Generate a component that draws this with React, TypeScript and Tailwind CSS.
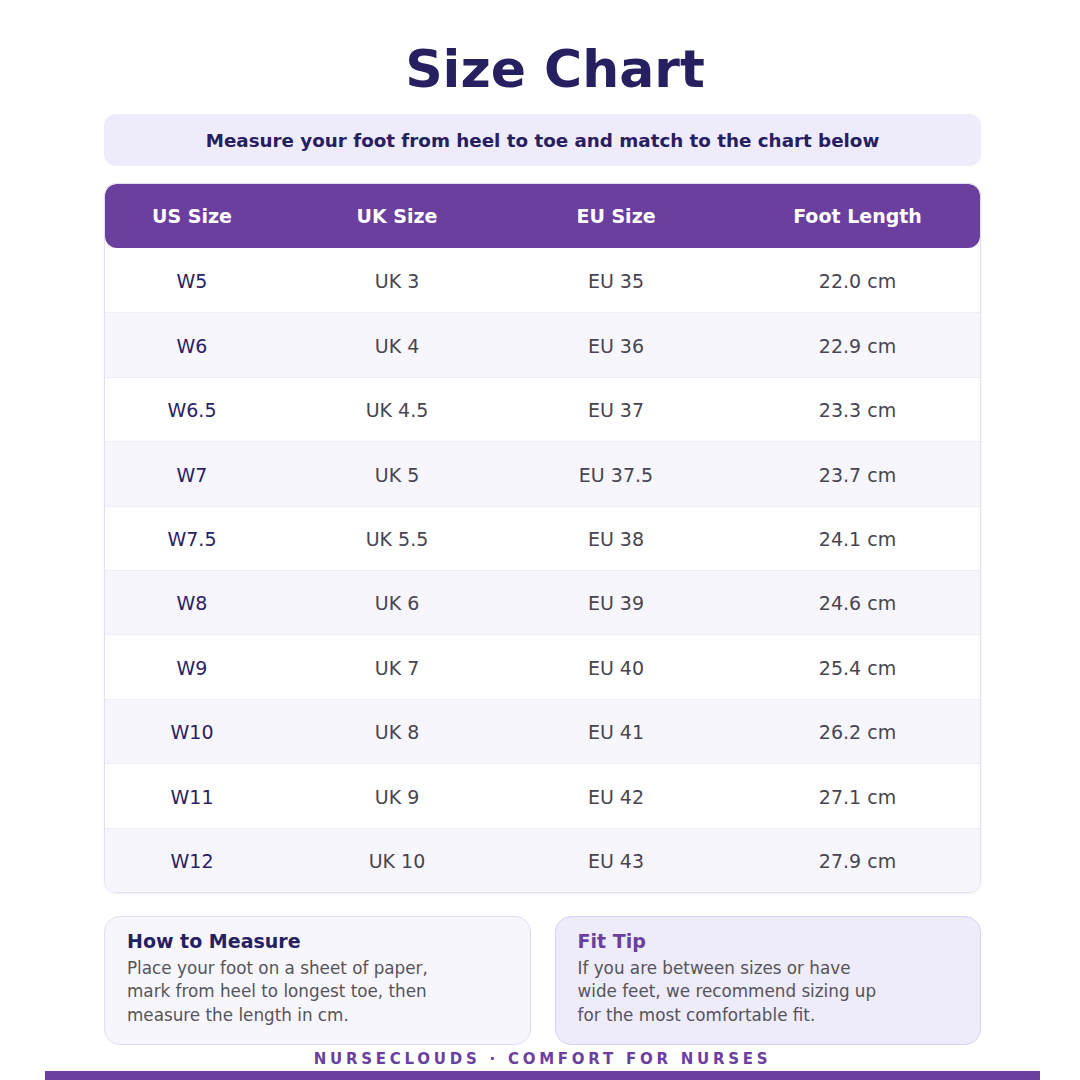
const rows = [
  { us: "W5", uk: "UK 3", eu: "EU 35", cm: "22.0 cm" },
  { us: "W6", uk: "UK 4", eu: "EU 36", cm: "22.9 cm" },
  { us: "W6.5", uk: "UK 4.5", eu: "EU 37", cm: "23.3 cm" },
  { us: "W7", uk: "UK 5", eu: "EU 37.5", cm: "23.7 cm" },
  { us: "W7.5", uk: "UK 5.5", eu: "EU 38", cm: "24.1 cm" },
  { us: "W8", uk: "UK 6", eu: "EU 39", cm: "24.6 cm" },
  { us: "W9", uk: "UK 7", eu: "EU 40", cm: "25.4 cm" },
  { us: "W10", uk: "UK 8", eu: "EU 41", cm: "26.2 cm" },
  { us: "W11", uk: "UK 9", eu: "EU 42", cm: "27.1 cm" },
  { us: "W12", uk: "UK 10", eu: "EU 43", cm: "27.9 cm" },
];

const cols = "grid grid-cols-[174px_236px_202px_265px]";

export default function App() {
  return (
    <div className="relative h-[1080px] w-[1080px] overflow-hidden bg-white font-['DejaVu_Sans',sans-serif]">
      <div className="ml-[104px] w-[877px] pt-[36px]">
        <h1 className="pl-[25px] text-center text-[52px] font-bold leading-[66px] text-[#272060]">Size Chart</h1>

        <div className="mt-[12px] flex h-[52px] items-center justify-center rounded-xl bg-[#eeecfb] pt-[2px] text-[18.3px] font-bold text-[#272060]">
          Measure your foot from heel to toe and match to the chart below
        </div>

        <div className="mt-[17px] overflow-hidden rounded-xl border border-[#e3dff0] shadow-[0_1px_3px_rgba(80,60,140,0.08)]">
          <div className={`${cols} h-[64px] items-center rounded-xl bg-[#6b3f9e] text-center text-[19px] font-bold text-white`}>
            <div>US Size</div>
            <div>UK Size</div>
            <div>EU Size</div>
            <div className="pl-[16px]">Foot Length</div>
          </div>
          {rows.map((row, i) => (
            <div
              className={`${cols} h-[64.4px] items-center pt-[2px] text-center text-[19px] ${i > 0 ? "border-t border-[#f0edf8]" : ""} ${i % 2 === 1 ? "bg-[#f8f6fd]" : "bg-white"}`}
              key={row.us}
            >
              <div className="text-[#2a2262]">{row.us}</div>
              <div className="text-[#474550]">{row.uk}</div>
              <div className="text-[#474550]">{row.eu}</div>
              <div className="pl-[16px] text-[#474550]">{row.cm}</div>
            </div>
          ))}
        </div>

        <div className="mt-[23px] grid grid-cols-2 gap-6">
          <div className="h-[129px] rounded-2xl border border-[#e2dcf2] bg-[#f8f6fd] px-[22px] pt-[11px]">
            <h2 className="text-[19px] font-bold leading-[26px] text-[#272060]">How to Measure</h2>
            <p className="mt-[3px] w-[315px] text-[16.8px] leading-[23.5px] text-[#555459]">
              Place your foot on a sheet of paper, mark from heel to longest toe, then measure the length in cm.
            </p>
          </div>
          <div className="h-[129px] rounded-2xl border border-[#d9d1f3] bg-[#eeebfb] px-[22px] pt-[11px]">
            <h2 className="text-[19px] font-bold leading-[26px] text-[#6b3f9e]">Fit Tip</h2>
            <p className="mt-[3px] w-[315px] text-[16.8px] leading-[23.5px] text-[#555459]">
              If you are between sizes or have wide feet, we recommend sizing up for the most comfortable fit.
            </p>
          </div>
        </div>

        <p className="mt-[3px] text-center text-[15px] font-bold tracking-[0.25em] text-[#6b3f9e]">
          NURSECLOUDS · COMFORT FOR NURSES
        </p>
      </div>
      <div className="absolute bottom-0 left-[45px] h-[9px] w-[995px] bg-[#6b3f9e]" />
    </div>
  );
}
